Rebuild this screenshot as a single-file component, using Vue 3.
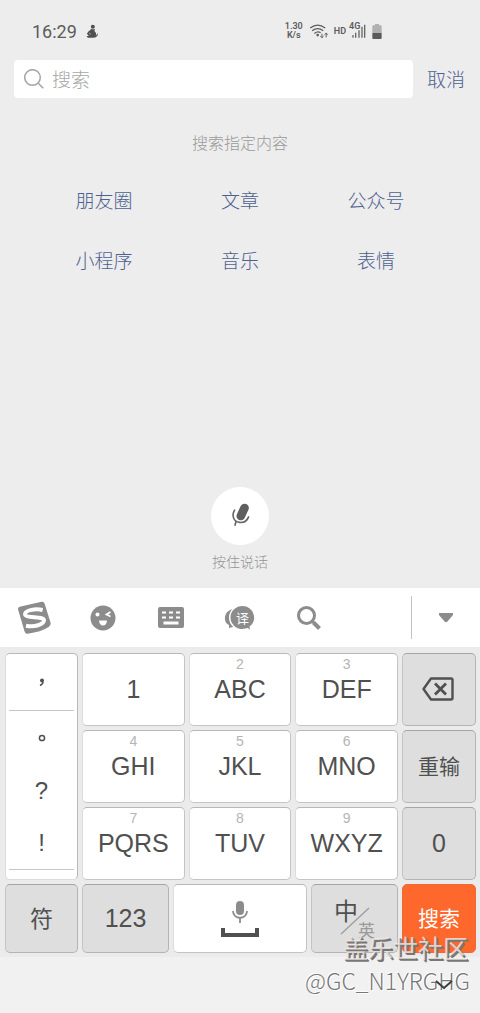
<script setup>
import { ref } from 'vue'

const query = ref('')
const topics = ['朋友圈', '文章', '公众号', '小程序', '音乐', '表情']
const punctuation = [',', '。', '?', '!']
const rows = [
  [
    { digit: '', label: '1' },
    { digit: '2', label: 'ABC' },
    { digit: '3', label: 'DEF' },
  ],
  [
    { digit: '4', label: 'GHI' },
    { digit: '5', label: 'JKL' },
    { digit: '6', label: 'MNO' },
  ],
  [
    { digit: '7', label: 'PQRS' },
    { digit: '8', label: 'TUV' },
    { digit: '9', label: 'WXYZ' },
  ],
]
const letterKeys = rows.flat()
</script>

<template>
  <div class="screen">
    <header class="status">
      <div class="status-side">
        <time class="clock">16:29</time>
        <svg class="figure" viewBox="256 70 38 42" aria-hidden="true">
          <circle cx="276" cy="78" r="6" />
          <path d="M270 84Q276 88 282 84L281 92Q288 97 285 106L291 96L290 105Q285 112 276 111H261L257 107L264 105L258 99L264 91Q270 90 270 84Z" />
          <path d="M265 97L270 101" class="figure-cut" />
        </svg>
      </div>
      <div class="status-side status-right">
        <div class="speed"><span>1.30</span><span>K/s</span></div>
        <svg class="wifi" viewBox="207 67 60 46" aria-hidden="true">
          <g fill="none" stroke="#5c5c5c" stroke-width="4">
            <path d="M210 79Q233 62 256 79" />
            <path d="M216 88Q233 74 250 88" />
            <path d="M223 96Q233 87 242 94" />
            <path d="M246 97V109M241 104L246 109L251 104M259 108V95M254 100L259 95L264 100" stroke-width="3" />
          </g>
          <circle cx="233" cy="101" r="4" fill="#5c5c5c" />
        </svg>
        <span class="hd">HD</span>
        <div class="cell">
          <span class="network">4G</span>
          <svg viewBox="336 72 42 42" aria-hidden="true">
            <path d="M339 113V105M347 113V98M357 113V91M366 113V80M374 113V74" fill="none" stroke="#666" stroke-width="4" />
          </svg>
        </div>
        <svg class="battery" viewBox="395 69 28 45" aria-hidden="true">
          <path d="M403 69H415V73H420Q423 73 423 76V96H395V76Q395 73 398 73H403Z" fill="#b1b1b1" />
          <path d="M395 96H423V111Q423 114 420 114H398Q395 114 395 111Z" fill="#5c5c5c" />
        </svg>
      </div>
    </header>

    <main class="content">
      <form class="search" @submit.prevent>
        <label class="field">
          <svg viewBox="0 0 20 20" aria-hidden="true">
            <circle cx="8.500" cy="8.500" r="7.800" />
            <path d="M14 14L19.300 19.300" />
          </svg>
          <input v-model="query" type="text" placeholder="搜索" aria-label="搜索" />
        </label>
        <button type="button" class="cancel">取消</button>
      </form>

      <h1 class="heading">搜索指定内容</h1>
      <nav class="topics">
        <a v-for="topic in topics" :key="topic" href="#">{{ topic }}</a>
      </nav>

      <div class="voice">
        <button id="talk" type="button" aria-labelledby="talk-label">
          <svg viewBox="123 84 56 72" aria-hidden="true">
            <path d="M163 99L152 123" stroke="#5e5e5e" stroke-width="26" stroke-linecap="round" />
            <path d="M134 104C122 124 132 140 148 142C161 144 171 137 176 124" fill="none" stroke="#666" stroke-width="5" />
            <path d="M138 139L134 152" stroke="#666" stroke-width="5" />
          </svg>
        </button>
        <span id="talk-label">按住说话</span>
      </div>
    </main>

    <section class="keyboard" aria-label="键盘">
      <div class="toolbar">
        <button type="button" aria-label="搜狗">
          <svg width="34" height="34" viewBox="50 46 102 102">
            <path d="M58 63L124 48Q131 47 133 54L151 112Q152 118 145 124Q122 139 82 144Q75 145 73 138L53 71Q52 65 58 63Z" fill="#8c8c8c" />
            <path d="M127 73C105 68 76 73 74 85C73 99 130 90 131 104C131 117 102 125 77 120" fill="none" stroke="#fff" stroke-width="12" />
          </svg>
        </button>
        <button type="button" aria-label="表情符号">
          <svg width="26" height="26" viewBox="0 0 26 26">
            <circle cx="13" cy="13" r="12.500" fill="#8c8c8c" />
            <circle cx="7.500" cy="9.500" r="2" fill="#fff" />
            <path d="M20.500 7L16.500 9.500L20.500 11.500" fill="none" stroke="#fff" stroke-width="1.800" />
            <path d="M9 15.500H17Q16.500 20.500 13 20.500T9 15.500Z" fill="#fff" />
          </svg>
        </button>
        <button type="button" aria-label="键盘布局">
          <svg width="28" height="22" viewBox="0 0 28 22">
            <rect x="1" width="26" height="21" rx="2" fill="#8c8c8c" />
            <path d="M5 5.500H9M12 5.500H16M19 5.500H23M5 10.500H9M12 10.500H16M19 10.500H23" stroke="#fff" stroke-width="2" />
            <path d="M6.500 16H21.500" stroke="#fff" stroke-width="3" />
          </svg>
        </button>
        <button type="button" class="translate" aria-label="翻译">
          <svg width="32" height="26" viewBox="0 0 32 26">
            <path d="M9 4C-1 6-1 18 5 20L5 23L9 22Z" fill="#8c8c8c" />
            <path d="M18.500 1A12 11.500 0 0 0 18.500 24L24 23L26 25L25.500 21.500A12 11.500 0 0 0 18.500 1Z" fill="#8c8c8c" stroke="#fff" stroke-width="3" paint-order="stroke" stroke-linejoin="round" />
            <text x="18.500" y="17.500" text-anchor="middle">译</text>
          </svg>
        </button>
        <button type="button" aria-label="查找">
          <svg width="26" height="26" viewBox="0 0 26 26">
            <circle cx="10.500" cy="10.500" r="8" fill="none" stroke="#8c8c8c" stroke-width="3" />
            <path d="M16 16L18 18" stroke="#8c8c8c" stroke-width="2.500" />
            <path d="M17.500 17.500L23.500 23.500" stroke="#8c8c8c" stroke-width="4" />
          </svg>
        </button>
        <button type="button" class="collapse" aria-label="收起">
          <svg width="14" height="10" viewBox="0 0 14 10">
            <path d="M0 0H14V2L8 9H6L0 2Z" fill="#8c8c8c" />
          </svg>
        </button>
      </div>

      <div class="keys">
        <div class="marks">
          <button v-for="mark in punctuation" :key="mark" type="button">
            <svg v-if="mark === '。'" width="8" height="8" viewBox="0 0 8 8" aria-label="。">
              <circle cx="4" cy="4" r="2.600" fill="none" stroke="#505050" stroke-width="1.500" />
            </svg>
            <svg v-else-if="mark === ','" width="6" height="9" viewBox="0 0 6 9" aria-label=",">
              <path d="M1 7.500Q4 6 4 4" fill="none" stroke="#505050" stroke-width="1.500" />
              <circle cx="3" cy="2.500" r="2" fill="#505050" />
            </svg>
            <template v-else>{{ mark }}</template>
          </button>
        </div>
        <div class="letters">
          <button v-for="key in letterKeys" :key="key.label" type="button" class="key">
            <small v-if="key.digit">{{ key.digit }}</small>{{ key.label }}
          </button>
        </div>
        <div class="actions">
          <button type="button" class="key gray delete" aria-label="删除">
            <svg width="32" height="24" viewBox="0 0 32 24" fill="none" stroke="#505050">
              <path d="M9 1.500H29Q30.500 1.500 30.500 3V21Q30.500 22.500 29 22.500H9L1.500 12Z" stroke-width="2.400" stroke-linejoin="round" />
              <path d="M13 6.500L24 17.500M24 6.500L13 17.500" stroke-width="2.800" />
            </svg>
          </button>
          <button type="button" class="key gray cjk">重输</button>
          <button type="button" class="key gray">0</button>
        </div>
      </div>

      <div class="bottom-row">
        <button type="button" class="key gray symbol">符</button>
        <button type="button" class="key gray">123</button>
        <button type="button" class="key" aria-label="空格">
          <svg width="38" height="36" viewBox="0 0 38 36">
            <rect x="15" width="8" height="14" rx="4" fill="#8c8c8c" />
            <path d="M12 10C12 19 26 19 26 10M19 17V22" fill="none" stroke="#8c8c8c" stroke-width="1.800" />
            <path d="M2 27V34H36V27" fill="none" stroke="#505050" stroke-width="4" />
          </svg>
        </button>
        <button type="button" class="key gray language">
          <span>中</span>
          <svg width="30" height="28" viewBox="0 0 30 28" aria-hidden="true">
            <path d="M1 27L29 1" stroke="#9a9a9a" stroke-width="1.200" />
          </svg>
          <span class="secondary">英</span>
        </button>
        <button type="button" class="key submit">搜索</button>
      </div>

      <footer class="navigation">
        <button type="button" aria-label="隐藏键盘">
          <svg width="18" height="10" viewBox="0 0 18 10">
            <path d="M1 1L9 8L17 1" fill="none" stroke="#3d3d3d" stroke-width="2" />
          </svg>
        </button>
      </footer>
    </section>

    <div class="credit">
      <span class="community">盖乐世社区</span>
      <span class="author">@GC_N1YRGHG</span>
    </div>
  </div>
</template>

<style>
body {
  margin: 0;
  background: #ededed;
}
</style>

<style scoped>
.screen {
  position: relative;
  display: flex;
  flex-direction: column;
  min-height: 100vh;
  background: #ededed;
  font-family: "Liberation Sans", "Noto Sans CJK SC", sans-serif;
  color: #505050;
}
.screen * {
  box-sizing: border-box;
}
svg {
  display: block;
  flex: none;
}
button {
  margin: 0;
  padding: 0;
  border: 0;
  background: none;
  color: inherit;
  font: inherit;
}
.status {
  display: flex;
  align-items: center;
  justify-content: space-between;
  height: 60px;
  padding: 2px 98px 0 32px;
  font-family: Roboto, sans-serif;
  color: #5c5c5c;
}
.status-side {
  display: flex;
  align-items: center;
}
.clock {
  font-size: 18px;
}
.figure {
  width: 13px;
  height: 14px;
  margin-left: 9px;
  fill: #505050;
}
.figure-cut {
  fill: none;
  stroke: #ededed;
  stroke-width: 2;
}
.speed {
  display: flex;
  flex-direction: column;
  align-items: center;
  margin-right: 6px;
  font-size: 9px;
  font-weight: 600;
  line-height: 9px;
}
.wifi {
  width: 20px;
  height: 15px;
  margin-right: 5px;
}
.hd {
  margin-right: 3px;
  font-size: 9px;
  font-weight: 600;
}
.cell {
  position: relative;
  display: flex;
  justify-content: flex-end;
  width: 17px;
  margin-right: 6px;
}
.cell svg {
  width: 14px;
  height: 14px;
}
.network {
  position: absolute;
  top: -2px;
  left: 0;
  font-size: 9px;
  font-weight: 600;
  line-height: 9px;
}
.battery {
  width: 10px;
  height: 15px;
}
.content {
  display: flex;
  flex: 1;
  flex-direction: column;
  font-family: "Noto Sans CJK SC", sans-serif;
  font-weight: 300;
}
.search {
  display: flex;
  align-items: center;
  padding: 0 15px 0 14px;
}
.field {
  display: flex;
  flex: 1;
  align-items: center;
  gap: 8px;
  height: 38px;
  padding: 0 10px;
  border-radius: 4px;
  background: #fff;
}
.field svg {
  width: 20px;
  height: 20px;
  fill: none;
  stroke: #a5a5a5;
  stroke-width: 1.500;
}
.field input {
  flex: 1;
  min-width: 0;
  padding: 0 0 2px;
  border: 0;
  outline: 0;
  background: none;
  color: #505050;
  font: inherit;
  font-size: 19px;
}
.field input::placeholder {
  color: #a8a8a8;
  opacity: 1;
}
.cancel {
  margin-left: 14px;
  padding-bottom: 2px;
  color: #4d6190;
  font-size: 19px;
}
.heading {
  margin: 32px 0 0;
  color: #999;
  font-size: 16px;
  font-weight: 300;
  line-height: 24px;
  text-align: center;
}
.topics {
  display: grid;
  grid-template-columns: repeat(3, 1fr);
  padding: 16px 36px 0;
}
.topics a {
  color: #4d6190;
  font-size: 19px;
  line-height: 60px;
  text-align: center;
  text-decoration: none;
}
.voice {
  display: flex;
  flex-direction: column;
  align-items: center;
  gap: 6px;
  margin-top: auto;
  padding-bottom: 17px;
  color: #959595;
  font-size: 14px;
  line-height: 20px;
}
.voice button {
  display: grid;
  place-items: center;
  width: 58px;
  height: 58px;
  border-radius: 50%;
  background: #fff;
}
.voice svg {
  width: 19px;
  height: 24px;
  margin-bottom: 2px;
}
.keyboard {
  background: #ebebeb;
}
.toolbar {
  display: grid;
  grid-template-columns: repeat(7, 1fr);
  height: 59px;
  background: #fff;
}
.toolbar button {
  display: grid;
  place-items: center;
}
.toolbar .collapse {
  grid-column: 7;
  height: 43px;
  margin-top: 8px;
  border-left: 1px solid #c4c4c4;
}
.translate text {
  fill: #fff;
  font-family: "Noto Sans CJK SC", sans-serif;
  font-size: 13px;
}
.keys {
  display: grid;
  grid-template-columns: 73fr 316fr 74fr;
  gap: 4px;
  padding: 6px 4px 0 5px;
}
.marks,
.key {
  border: 1px solid #dcdcdc;
  border-top-color: #b8b8b8;
  border-radius: 5px;
  background: #fff;
}
.marks {
  display: grid;
  grid-template-rows: 57px repeat(3, 53px);
  padding: 0 3px;
  border-right-color: #b8b8b8;
  font-size: 24px;
}
.marks button {
  display: grid;
  place-items: center;
}
.marks button:first-child,
.marks button:last-child {
  border-bottom: 1px solid #c6c6c6;
}
.letters {
  display: grid;
  grid-template-columns: repeat(3, 1fr);
  grid-auto-rows: 73px;
  gap: 4px;
}
.actions {
  display: grid;
  grid-auto-rows: 73px;
  gap: 4px;
}
.key {
  position: relative;
  display: grid;
  place-items: center;
  border-right-color: #c4c4c4;
  border-bottom-color: #c4c4c4;
  font-size: 25px;
}
.key small {
  position: absolute;
  top: 2px;
  left: 0;
  width: 100%;
  color: #b4b4b4;
  font-size: 14px;
  line-height: 17px;
  text-align: center;
}
.gray {
  border-color: #a5a5a5 #b4b4b4 #b4b4b4 #c4c4c4;
  background: #dedede;
}
.delete {
  padding: 0 2px 2px 0;
}
.cjk,
.submit {
  padding-bottom: 3px;
  font-family: "Noto Sans CJK SC", sans-serif;
  font-size: 21px;
}
.symbol {
  padding-bottom: 3px;
  font-family: "Noto Sans CJK SC", sans-serif;
  font-size: 23px;
}
.bottom-row {
  display: grid;
  grid-template-columns: 73fr 87fr 134fr 87fr 74fr;
  grid-auto-rows: 69px;
  gap: 4px;
  padding: 4px 4px 4px 5px;
}
.language {
  font-family: "Noto Sans CJK SC", sans-serif;
  font-size: 24px;
  line-height: 24px;
}
.language span {
  position: absolute;
  top: 13px;
  left: 22px;
}
.language .secondary {
  top: 35px;
  left: 46px;
  color: #9a9a9a;
  font-size: 17px;
  line-height: 20px;
}
.language svg {
  margin-top: 4px;
}
.submit {
  border-color: #ee6a35;
  background: #ff682c;
  color: #fff;
}
.navigation {
  display: flex;
  align-items: center;
  justify-content: flex-end;
  height: 56px;
  padding: 0 27px;
  background: #f1f1f1;
}
.navigation button {
  position: relative;
  z-index: 1;
}
.credit {
  position: absolute;
  right: 10px;
  bottom: 17px;
  display: flex;
  flex-direction: column;
  align-items: flex-end;
  font-family: "Noto Sans CJK SC", sans-serif;
  pointer-events: none;
}
.community {
  margin-right: 2px;
  color: rgba(245, 235, 230, 0.8);
  font-size: 25px;
  line-height: 34px;
  text-shadow: 1px 1px 0 #777, 2px 2px 0 #777;
}
.author {
  color: #777;
  font-size: 23px;
  font-weight: 300;
  line-height: 32px;
  text-shadow: -1px -1px 0 #fff, 1px 1px 0 #fff;
}
</style>
